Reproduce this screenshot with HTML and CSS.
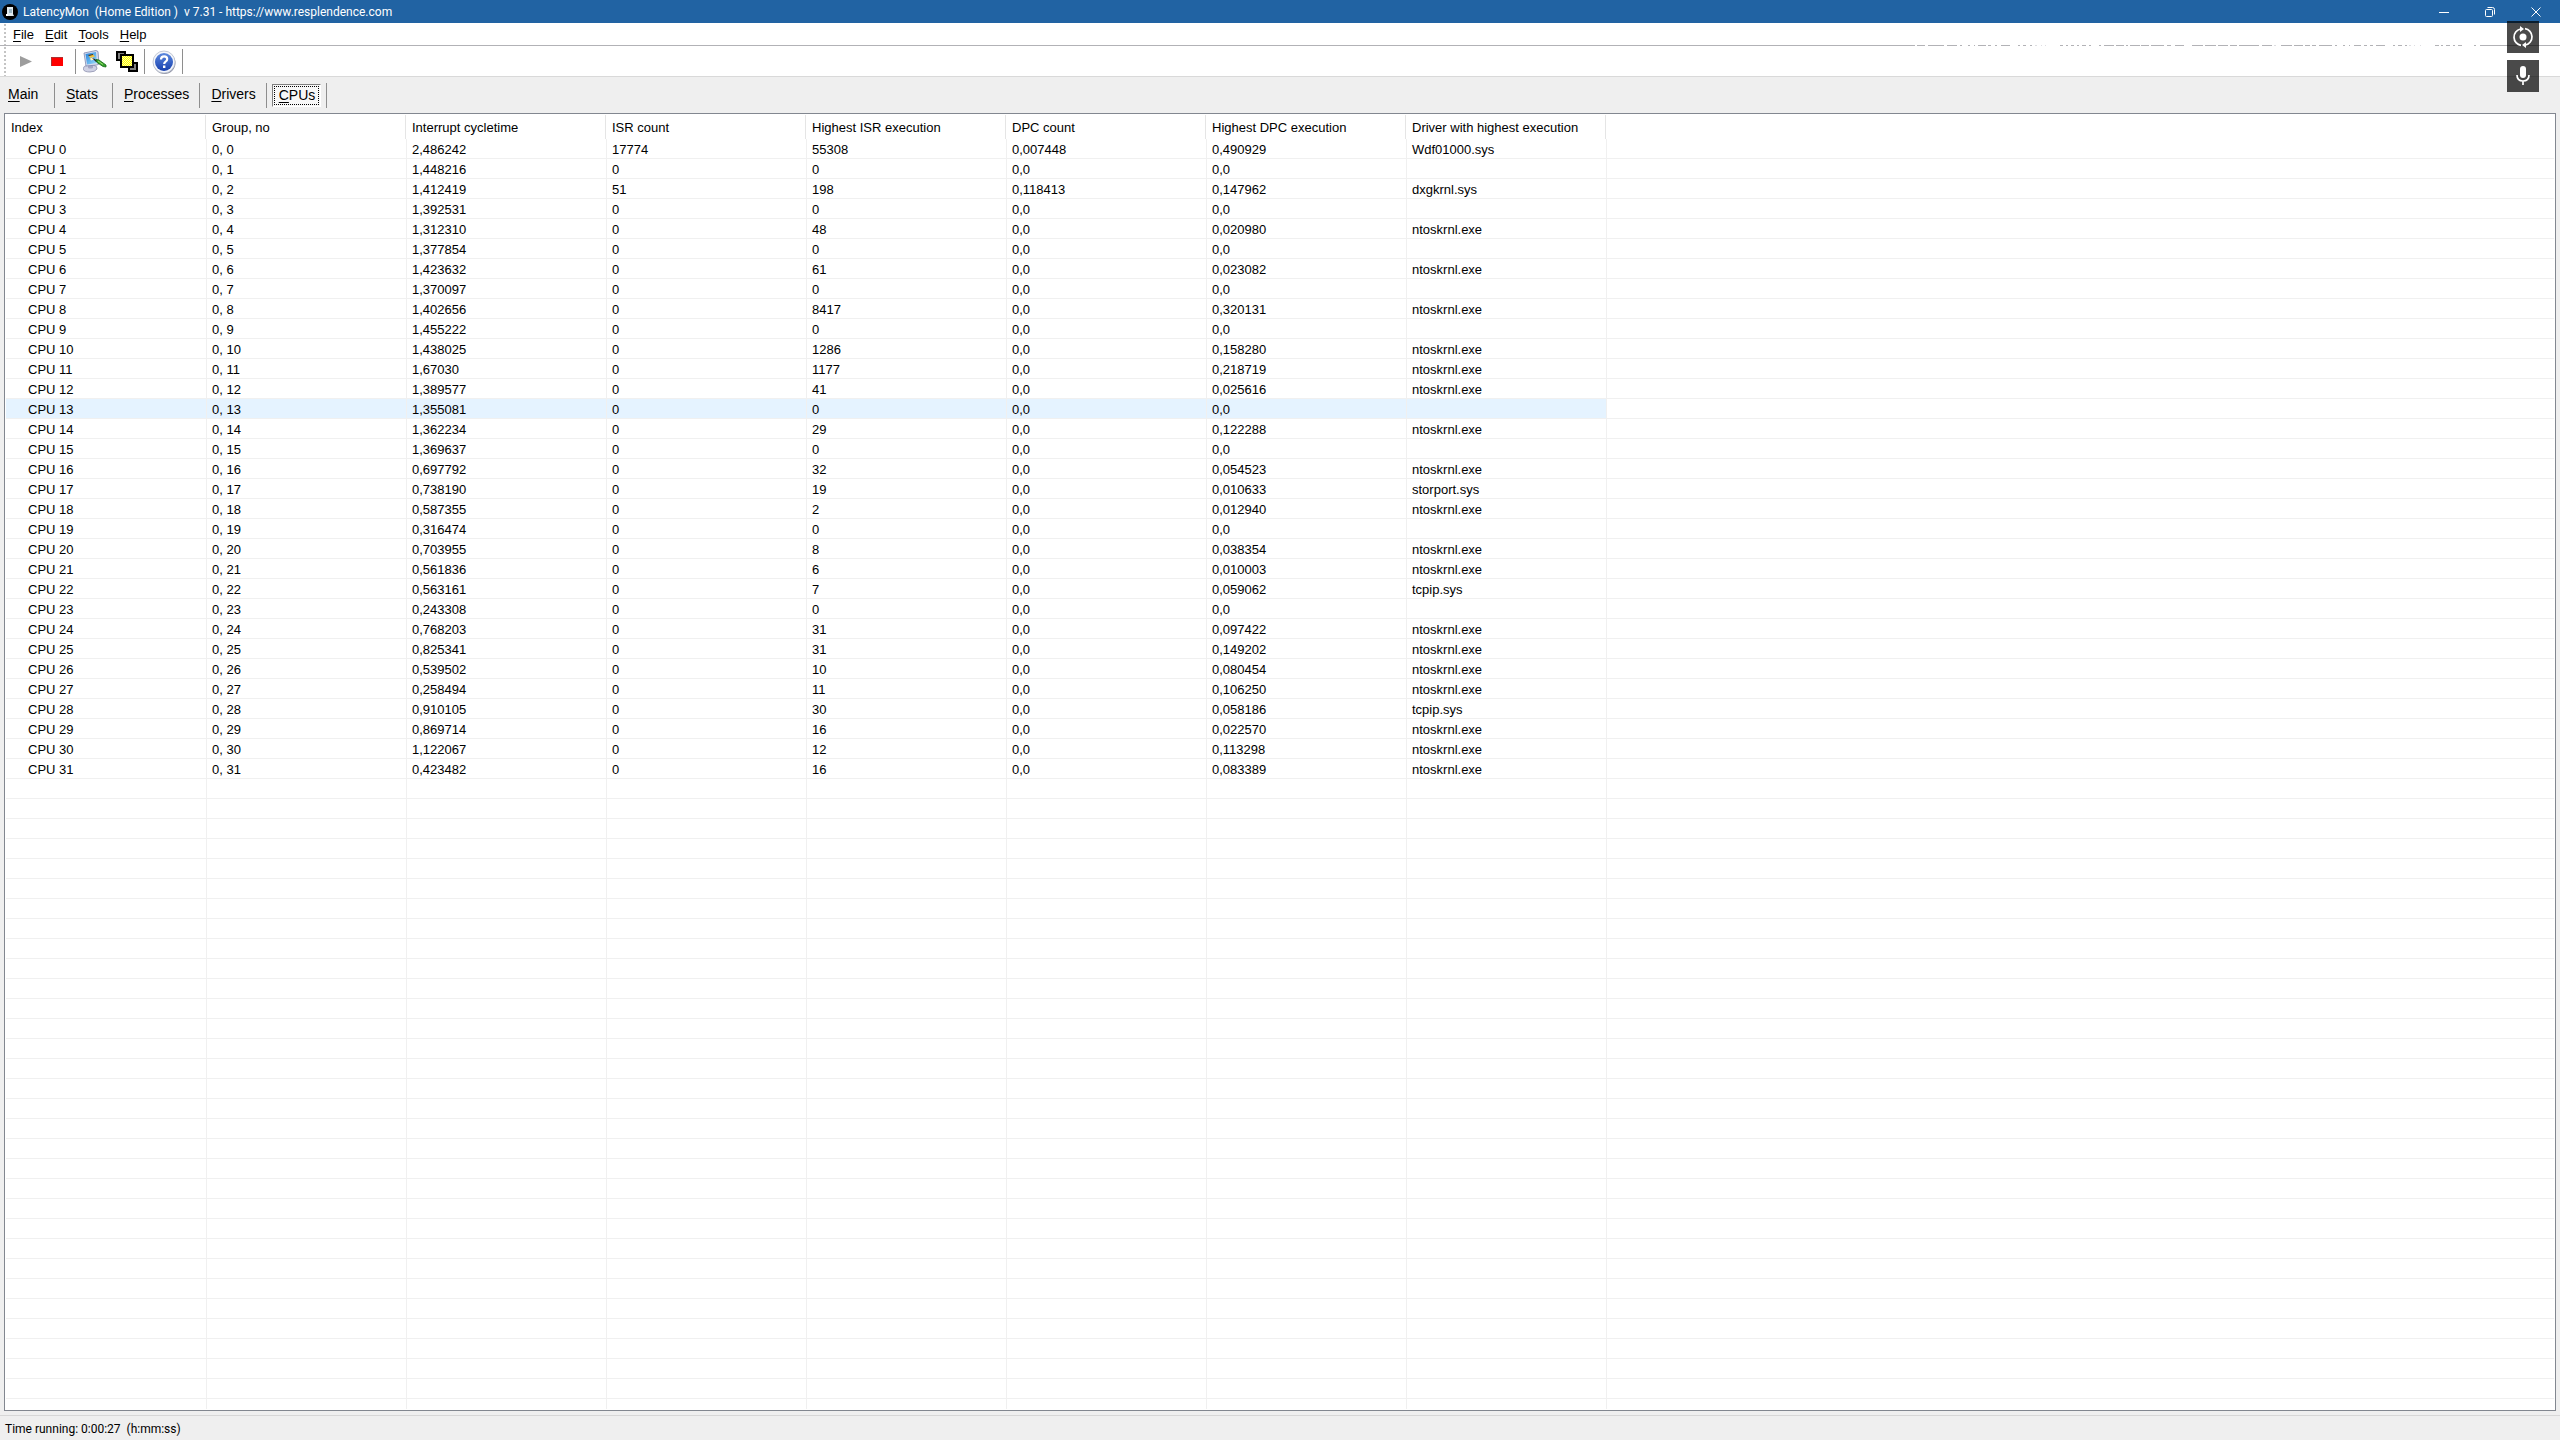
FILE: index.html
```html
<!DOCTYPE html>
<html lang="en">
<head>
<meta charset="utf-8">
<title>LatencyMon</title>
<link rel="stylesheet" href="styles.css">
</head>
<body>
<div class="window">
  <header class="titlebar">
    <svg class="app-icon" viewBox="0 0 16 16" aria-hidden="true"><circle cx="8" cy="8" r="8" fill="#000"/><path d="M5 3h6v7l1 2H5z" fill="#dfe9ee"/><path d="M7 5h3v4H7z" fill="#9fb9c6"/><path d="M4 10h2v2H4z" fill="#fff"/></svg>
    <h1 class="title">LatencyMon&nbsp; (Home Edition )&nbsp; v 7.31 - https://www.resplendence.com</h1>
    <div class="caption">
      <button class="cap" aria-label="Minimize"><svg viewBox="0 0 12 12"><path d="M1 6.5h10"/></svg></button>
      <button class="cap" aria-label="Restore"><svg viewBox="0 0 12 12"><rect x="1.5" y="3.5" width="7" height="7" rx="1"/><path d="M3.5 1.5h5q2 0 2 2v5"/></svg></button>
      <button class="cap" aria-label="Close"><svg viewBox="0 0 12 12"><path d="M1.500 1.500l9 9M10.500 1.500l-9 9"/></svg></button>
    </div>
  </header>

  <nav class="menubar">
    <button class="menu"><u>F</u>ile</button>
    <button class="menu"><u>E</u>dit</button>
    <button class="menu"><u>T</u>ools</button>
    <button class="menu"><u>H</u>elp</button>
    <svg class="broken-line" viewBox="1915 0 565 1" preserveAspectRatio="none" aria-hidden="true"><path fill="#fff" d="M1915 0h565v1h-565z"/><path fill="#b2b2b6" d="M1917 0h8v1h-8zM1928 0h16v1h-16zM1947 0h10v1h-10zM1960 0h2v1h-2zM1968 0h2v1h-2zM1974 0h1v1h-1zM1978 0h8v1h-8zM1988 0h3v1h-3zM1995 0h2v1h-2zM2001 0h9v1h-9zM2018 0h2v1h-2zM2023 0h3v1h-3zM2030 0h2v1h-2zM2060 0h3v1h-3zM2066 0h2v1h-2zM2071 0h3v1h-3zM2077 0h2v1h-2zM2082 0h4v1h-4zM2089 0h2v1h-2zM2099 0h2v1h-2zM2104 0h10v1h-10zM2116 0h8v1h-8zM2126 0h2v1h-2zM2130 0h10v1h-10zM2141 0h8v1h-8zM2151 0h13v1h-13zM2167 0h4v1h-4zM2175 0h9v1h-9zM2192 0h11v1h-11zM2205 0h11v1h-11zM2218 0h10v1h-10zM2230 0h7v1h-7zM2239 0h20v1h-20zM2262 0h10v1h-10zM2281 0h11v1h-11zM2294 0h9v1h-9zM2305 0h5v1h-5zM2312 0h4v1h-4zM2319 0h13v1h-13zM2335 0h2v1h-2zM2343 0h2v1h-2zM2349 0h1v1h-1zM2354 0h7v1h-7zM2364 0h3v1h-3zM2370 0h3v1h-3zM2376 0h9v1h-9zM2393 0h2v1h-2zM2398 0h4v1h-4zM2405 0h2v1h-2zM2435 0h4v1h-4zM2441 0h2v1h-2zM2446 0h4v1h-4zM2453 0h2v1h-2zM2458 0h4v1h-4zM2474 0h2v1h-2z"/><path fill="#dedee2" d="M2035 0h2v1h-2zM2041 0h1v1h-1zM2045 0h1v1h-1zM2409 0h2v1h-2zM2414 0h1v1h-1zM2420 0h1v1h-1zM2274 0h2v1h-2z"/></svg>
  </nav>

  <div class="toolbar" role="toolbar">
    <button class="tool play" aria-label="Start"><svg viewBox="0 0 24 24"><path d="M6 6l12 5.500L6 17z" fill="#9d9d9d"/></svg></button>
    <button class="tool stop" aria-label="Stop"><svg viewBox="0 0 24 24"><path d="M6 7h12v9H6z" fill="#f00"/><path d="M6.500 16V7.500H18" fill="none" stroke="#a33"/></svg></button>
    <span class="sep"></span>
    <button class="tool" aria-label="Options"><svg viewBox="0 0 24 24">
      <defs><linearGradient id="scr" x1="0" y1="0" x2="1" y2="1"><stop offset="0" stop-color="#1f7fdc"/><stop offset="1" stop-color="#9fe0fb"/></linearGradient></defs>
      <path d="M0 19q0-3 5-4h5q5 1 4 4-2 3-7 3-6 0-7-3z" fill="#cfd1e4" stroke="#8d90ad" stroke-width=".8"/>
      <path d="M5 15h5v3q-3 1-5 0z" fill="#a4a6c4"/>
      <path d="M1 3l12-2.500 2 1L16 14l-2 1-11 1z" fill="#d8dcee" stroke="#7c86ad" stroke-width=".8"/>
      <path d="M2.500 4l10.500-2 1 11-10 1.500z" fill="url(#scr)"/>
      <path d="M6 6l4-1.500 2 2L7 8z" fill="#f6c33c"/><path d="M7 8.500l3-1 1 2-3 1z" fill="#fff4c4"/><path d="M5 5l5-1v1L6 6z" fill="#5a3a10"/>
      <path d="M9 8l3 1 3 3-2 0z" fill="#222"/><path d="M13 9.500l3 .5 7 5v2l-3-.5-6-4z" fill="#35a02c" stroke="#146b14" stroke-width=".8"/><path d="M15 11l5 3.500" stroke="#9be06c"/>
    </svg></button>
    <button class="tool" aria-label="Windows"><svg viewBox="0 0 24 24" shape-rendering="crispEdges">
      <defs><pattern id="chk" width="2" height="2" patternUnits="userSpaceOnUse"><path d="M0 0h2v2H0z" fill="#ff0"/><path d="M0 0h1v1H0zM1 1h1v1H1z" fill="#ffffa8"/></pattern></defs>
      <path d="M3 2h8v8H3z" fill="#808080" stroke="#000" stroke-width="2"/><path d="M15 13h8v8h-8z" fill="#808080" stroke="#000" stroke-width="2"/>
      <path d="M7 5h12v12H7z" fill="url(#chk)" stroke="#000" stroke-width="2"/>
    </svg></button>
    <span class="sep"></span>
    <button class="tool" aria-label="Help"><svg viewBox="0 0 24 24">
      <defs><linearGradient id="hlp" x1="0" y1="0" x2="0" y2="1"><stop offset="0" stop-color="#5b88de"/><stop offset="1" stop-color="#1740ae"/></linearGradient></defs>
      <circle cx="12.500" cy="13" r="11" fill="#8f93a4"/><circle cx="12" cy="12" r="11" fill="#f4f6fb" stroke="#b5bccb" stroke-width=".8"/><circle cx="12" cy="12" r="9" fill="url(#hlp)"/>
      <path d="M9 9.500q0-3.200 3.200-3.200 3 0 3 2.700 0 1.600-1.600 2.600-1.400.9-1.400 2.400" fill="none" stroke="#fff" stroke-width="2.200"/><path d="M11 15.500h2.400V18H11z" fill="#fff"/>
    </svg></button>
    <span class="sep"></span>
  </div>

  <nav class="tabs">
    <button class="tab"><u>M</u>ain</button><span class="sep"></span>
    <button class="tab"><u>S</u>tats</button><span class="sep"></span>
    <button class="tab"><u>P</u>rocesses</button><span class="sep"></span>
    <button class="tab"><u>D</u>rivers</button><span class="sep"></span>
    <button class="tab active"><u>C</u>PUs</button><span class="sep"></span>
  </nav>

  <main class="list">
    <table class="cpus">
      <colgroup><col class="c-first"><col class="c"><col class="c"><col class="c"><col class="c"><col class="c"><col class="c"><col class="c"><col></colgroup>
      <thead><tr><th>Index</th><th>Group, no</th><th>Interrupt cycletime</th><th>ISR count</th><th>Highest ISR execution</th><th>DPC count</th><th>Highest DPC execution</th><th>Driver with highest execution</th><th></th></tr></thead>
      <tbody>
      <tr><td>CPU 0</td><td>0, 0</td><td>2,486242</td><td>17774</td><td>55308</td><td>0,007448</td><td>0,490929</td><td>Wdf01000.sys</td><td></td></tr>
      <tr><td>CPU 1</td><td>0, 1</td><td>1,448216</td><td>0</td><td>0</td><td>0,0</td><td>0,0</td><td></td><td></td></tr>
      <tr><td>CPU 2</td><td>0, 2</td><td>1,412419</td><td>51</td><td>198</td><td>0,118413</td><td>0,147962</td><td>dxgkrnl.sys</td><td></td></tr>
      <tr><td>CPU 3</td><td>0, 3</td><td>1,392531</td><td>0</td><td>0</td><td>0,0</td><td>0,0</td><td></td><td></td></tr>
      <tr><td>CPU 4</td><td>0, 4</td><td>1,312310</td><td>0</td><td>48</td><td>0,0</td><td>0,020980</td><td>ntoskrnl.exe</td><td></td></tr>
      <tr><td>CPU 5</td><td>0, 5</td><td>1,377854</td><td>0</td><td>0</td><td>0,0</td><td>0,0</td><td></td><td></td></tr>
      <tr><td>CPU 6</td><td>0, 6</td><td>1,423632</td><td>0</td><td>61</td><td>0,0</td><td>0,023082</td><td>ntoskrnl.exe</td><td></td></tr>
      <tr><td>CPU 7</td><td>0, 7</td><td>1,370097</td><td>0</td><td>0</td><td>0,0</td><td>0,0</td><td></td><td></td></tr>
      <tr><td>CPU 8</td><td>0, 8</td><td>1,402656</td><td>0</td><td>8417</td><td>0,0</td><td>0,320131</td><td>ntoskrnl.exe</td><td></td></tr>
      <tr><td>CPU 9</td><td>0, 9</td><td>1,455222</td><td>0</td><td>0</td><td>0,0</td><td>0,0</td><td></td><td></td></tr>
      <tr><td>CPU 10</td><td>0, 10</td><td>1,438025</td><td>0</td><td>1286</td><td>0,0</td><td>0,158280</td><td>ntoskrnl.exe</td><td></td></tr>
      <tr><td>CPU 11</td><td>0, 11</td><td>1,67030</td><td>0</td><td>1177</td><td>0,0</td><td>0,218719</td><td>ntoskrnl.exe</td><td></td></tr>
      <tr><td>CPU 12</td><td>0, 12</td><td>1,389577</td><td>0</td><td>41</td><td>0,0</td><td>0,025616</td><td>ntoskrnl.exe</td><td></td></tr>
      <tr class="hot"><td>CPU 13</td><td>0, 13</td><td>1,355081</td><td>0</td><td>0</td><td>0,0</td><td>0,0</td><td></td><td></td></tr>
      <tr><td>CPU 14</td><td>0, 14</td><td>1,362234</td><td>0</td><td>29</td><td>0,0</td><td>0,122288</td><td>ntoskrnl.exe</td><td></td></tr>
      <tr><td>CPU 15</td><td>0, 15</td><td>1,369637</td><td>0</td><td>0</td><td>0,0</td><td>0,0</td><td></td><td></td></tr>
      <tr><td>CPU 16</td><td>0, 16</td><td>0,697792</td><td>0</td><td>32</td><td>0,0</td><td>0,054523</td><td>ntoskrnl.exe</td><td></td></tr>
      <tr><td>CPU 17</td><td>0, 17</td><td>0,738190</td><td>0</td><td>19</td><td>0,0</td><td>0,010633</td><td>storport.sys</td><td></td></tr>
      <tr><td>CPU 18</td><td>0, 18</td><td>0,587355</td><td>0</td><td>2</td><td>0,0</td><td>0,012940</td><td>ntoskrnl.exe</td><td></td></tr>
      <tr><td>CPU 19</td><td>0, 19</td><td>0,316474</td><td>0</td><td>0</td><td>0,0</td><td>0,0</td><td></td><td></td></tr>
      <tr><td>CPU 20</td><td>0, 20</td><td>0,703955</td><td>0</td><td>8</td><td>0,0</td><td>0,038354</td><td>ntoskrnl.exe</td><td></td></tr>
      <tr><td>CPU 21</td><td>0, 21</td><td>0,561836</td><td>0</td><td>6</td><td>0,0</td><td>0,010003</td><td>ntoskrnl.exe</td><td></td></tr>
      <tr><td>CPU 22</td><td>0, 22</td><td>0,563161</td><td>0</td><td>7</td><td>0,0</td><td>0,059062</td><td>tcpip.sys</td><td></td></tr>
      <tr><td>CPU 23</td><td>0, 23</td><td>0,243308</td><td>0</td><td>0</td><td>0,0</td><td>0,0</td><td></td><td></td></tr>
      <tr><td>CPU 24</td><td>0, 24</td><td>0,768203</td><td>0</td><td>31</td><td>0,0</td><td>0,097422</td><td>ntoskrnl.exe</td><td></td></tr>
      <tr><td>CPU 25</td><td>0, 25</td><td>0,825341</td><td>0</td><td>31</td><td>0,0</td><td>0,149202</td><td>ntoskrnl.exe</td><td></td></tr>
      <tr><td>CPU 26</td><td>0, 26</td><td>0,539502</td><td>0</td><td>10</td><td>0,0</td><td>0,080454</td><td>ntoskrnl.exe</td><td></td></tr>
      <tr><td>CPU 27</td><td>0, 27</td><td>0,258494</td><td>0</td><td>11</td><td>0,0</td><td>0,106250</td><td>ntoskrnl.exe</td><td></td></tr>
      <tr><td>CPU 28</td><td>0, 28</td><td>0,910105</td><td>0</td><td>30</td><td>0,0</td><td>0,058186</td><td>tcpip.sys</td><td></td></tr>
      <tr><td>CPU 29</td><td>0, 29</td><td>0,869714</td><td>0</td><td>16</td><td>0,0</td><td>0,022570</td><td>ntoskrnl.exe</td><td></td></tr>
      <tr><td>CPU 30</td><td>0, 30</td><td>1,122067</td><td>0</td><td>12</td><td>0,0</td><td>0,113298</td><td>ntoskrnl.exe</td><td></td></tr>
      <tr><td>CPU 31</td><td>0, 31</td><td>0,423482</td><td>0</td><td>16</td><td>0,0</td><td>0,083389</td><td>ntoskrnl.exe</td><td></td></tr>
      </tbody>
    </table>
    <div class="empty-rows"></div>
  </main>

  <footer class="status">Time running: 0:00:27&nbsp; (h:mm:ss)</footer>
</div>

<aside class="overlay">
  <button class="float" aria-label="Record"><svg viewBox="0 0 32 32"><circle cx="16" cy="16" r="3.500" fill="#fff"/><g fill="none" stroke="#fff" stroke-width="1.700"><path d="M14 24.300A8.300 8.300 0 0 1 13.500 8"/><path d="M18 7.700A8.300 8.300 0 0 1 18.500 24"/></g><path d="M13 5l4 3-4 3zM19 27l-4-3 4-3z" fill="#fff"/></svg></button>
  <button class="float" aria-label="Microphone"><svg viewBox="0 0 32 32"><rect x="13" y="6" width="6" height="12" rx="3" fill="#fff"/><path d="M10 15q0 6 6 6t6-6M16 21v4" fill="none" stroke="#fff" stroke-width="1.700"/></svg></button>
</aside>
</body>
</html>
```
FILE: styles.css
```css
* { box-sizing: border-box; }

body {
  margin: 0;
  font: 13px/20px "Liberation Sans", Arial, sans-serif;
  color: #000;
  background: #efefef;
}

button {
  margin: 0;
  padding: 0;
  border: 0;
  background: none;
  font: inherit;
  color: inherit;
}

svg { display: block; }

u { text-underline-offset: 2px; }

.window {
  display: flex;
  flex-direction: column;
  min-height: 100vh;
}

/* Title bar */
.titlebar {
  display: flex;
  align-items: center;
  height: 23px;
  padding-left: 2px;
  background: #2163a3;
  color: #fff;
}

.app-icon { width: 16px; height: 16px; }

.title {
  flex: 1;
  margin: 0 0 0 5px;
  font: 12px/22px Roboto, "Open Sans", sans-serif;
}

.caption {
  display: flex;
  padding-right: 1px;
}

.cap {
  display: grid;
  place-items: center;
  width: 46px;
  height: 22px;
}

.cap svg {
  width: 12px;
  height: 12px;
  fill: none;
  stroke: #fff;
}

/* Menu bar and toolbar share a dotted grip on the left edge */
.menubar,
.toolbar {
  display: flex;
  background: radial-gradient(circle at 1px 1px, #c4c4c4 1px, transparent 1px) 4px 1px / 2px 4px repeat-y, #fff;
}

.menubar {
  position: relative;
  height: 23px;
  padding-left: 13px;
  gap: 11px;
  border-bottom: 1px solid #b2b2b6;
}

.menu { line-height: 24px; }

.broken-line {
  position: absolute;
  right: 80px;
  bottom: -1px;
  width: 565px;
  height: 1px;
}

.toolbar {
  align-items: center;
  height: 31px;
  padding: 1px 0 0 14px;
  border-bottom: 1px solid #d9d9d9;
}

.tool { padding: 0 3px 0 4px; }

.tool svg { width: 24px; height: 24px; }

.play { padding: 0; }

.stop { padding: 0 3px 0 7px; }

.sep {
  width: 1px;
  height: 25px;
  background: #8e8e8e;
}

.toolbar .sep { margin: 0 3px; }

/* Tabs */
.tabs {
  display: flex;
  align-items: center;
  height: 36px;
  font-size: 14px;
}

.tab {
  min-width: 54px;
  padding: 0 10px 3px 8px;
  text-align: left;
}

.sep + .tab {
  min-width: 57px;
  padding: 0 10px 3px 11px;
}

.sep + .tab.active {
  min-width: 0;
  height: 23px;
  margin: 0 5px;
  padding: 0 5px 0 6px;
  border: 1px solid;
  border-color: #808080 #fff #fff #808080;
  outline: 1px dotted #000;
  outline-offset: -3px;
  background: #f7f7f7;
}

/* List view */
.list {
  flex: 1;
  display: flex;
  flex-direction: column;
  margin: 0 4px;
  padding: 1px;
  border: 1px solid #828790;
  background: #fff;
}

.cpus {
  width: 100%;
  table-layout: fixed;
  border-collapse: separate;
  border-spacing: 0;
}

.c-first { width: 201px; }

.c { width: 200px; }

.cpus th {
  height: 24px;
  padding: 2px 5px 0;
  text-align: left;
  font-weight: normal;
  background: linear-gradient(#e5e5e5, #e5e5e5) right 1px top 0 / 1px 100% no-repeat;
}

.cpus td {
  height: 20px;
  padding: 2px 5px 0;
  line-height: 17px;
  border-right: 1px solid #f0f0f0;
  border-bottom: 1px solid #f0f0f0;
  white-space: nowrap;
}

.cpus td:first-child { padding-left: 22px; }

.cpus th:last-child { background: none; }

.cpus td:last-child { border-right: 0; }

.hot td:not(:last-child) { background: #e5f3ff; }

.empty-rows {
  flex: 1;
  background:
    repeating-linear-gradient(#0000 0 19px, #f0f0f0 19px 20px),
    repeating-linear-gradient(90deg, #0000 0 199px, #f0f0f0 199px 200px) 1px 0 / 1600px 100% no-repeat;
}

/* Status bar */
.status {
  height: 25px;
  margin-top: 4px;
  padding-left: 5px;
  border-top: 1px solid #d7d7d7;
  font: 12px/26px Roboto, "Open Sans", sans-serif;
}

/* Recorder buttons floating over the window */
.overlay {
  position: absolute;
  top: 21px;
  right: 21px;
  display: grid;
  gap: 7px;
}

.float {
  width: 32px;
  height: 32px;
  background: rgba(0, 0, 0, .71);
}

.float svg { width: 32px; height: 32px; }
```
